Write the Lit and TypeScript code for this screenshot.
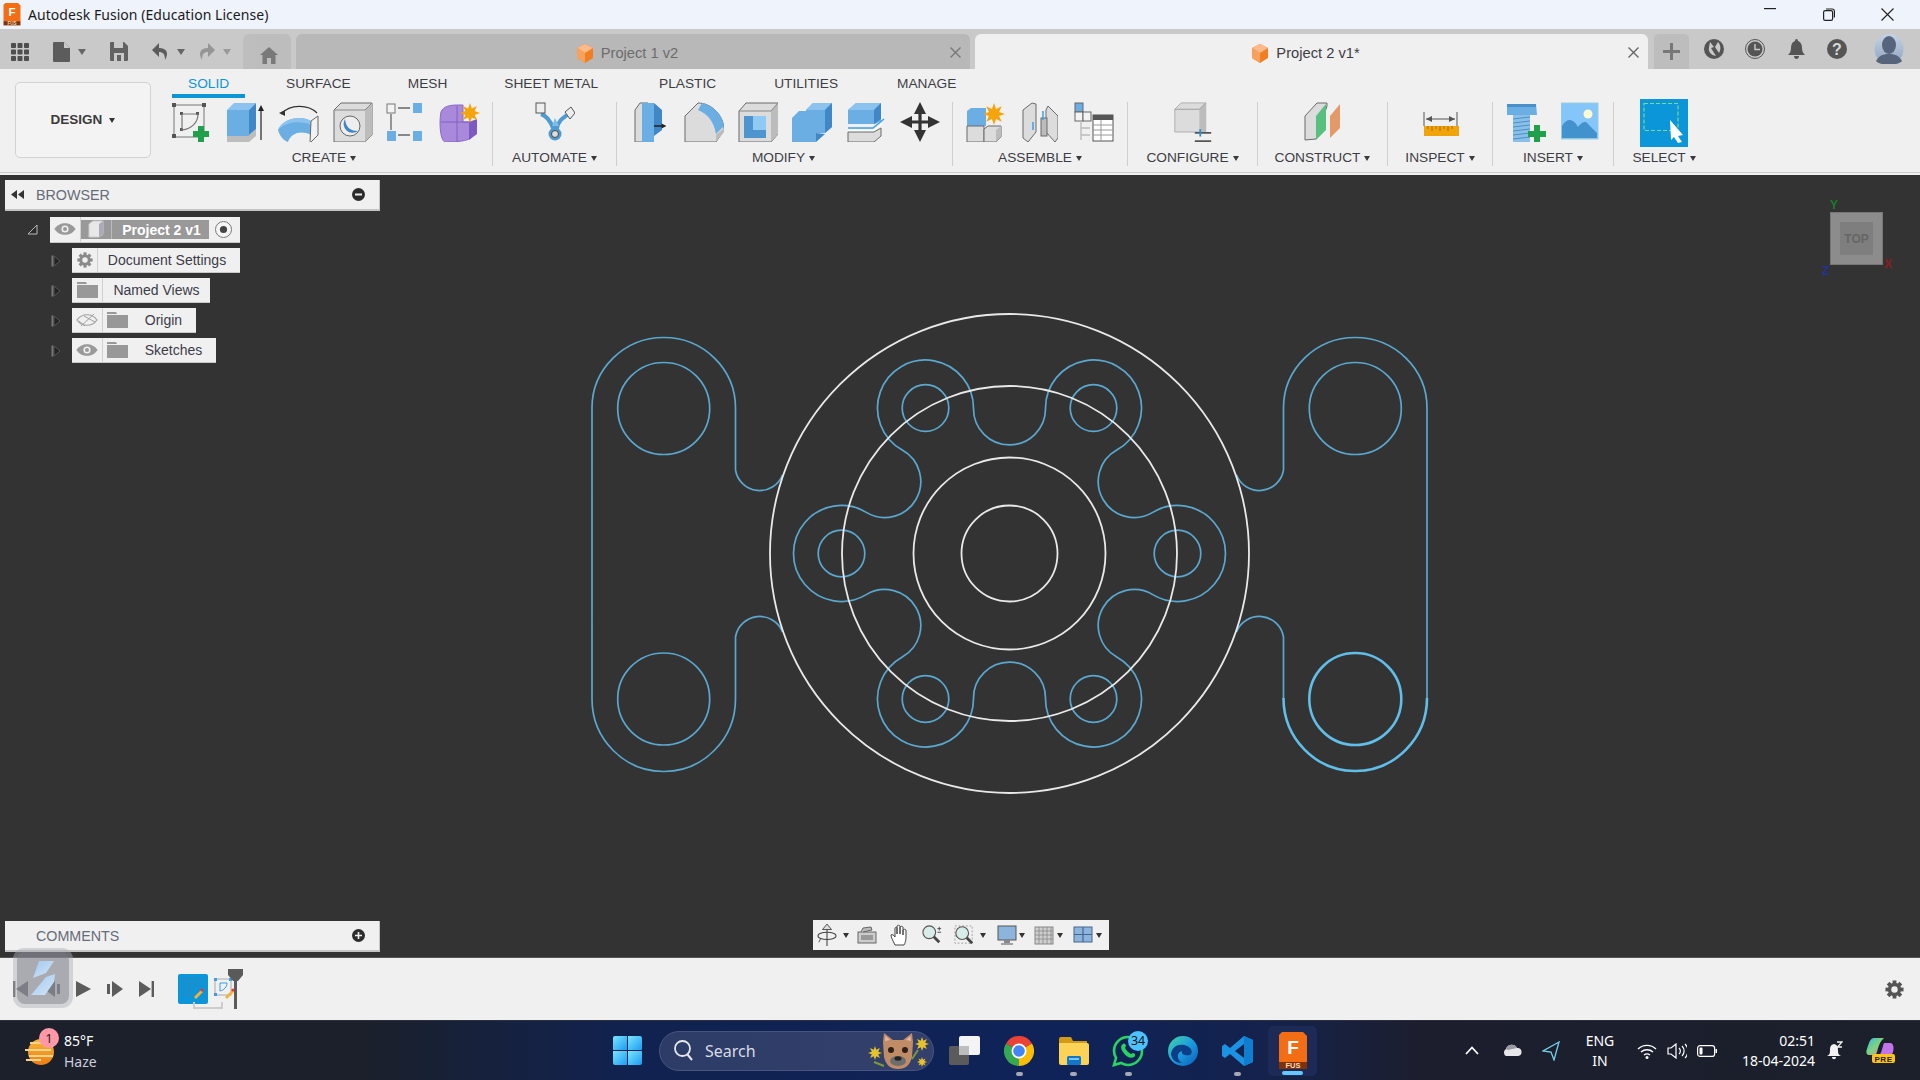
import { LitElement, html, css, svg } from "lit";
import { customElement } from "lit/decorators.js";

const I = (w: number, h: number, body: unknown, vw = w, vh = h) =>
  html`<svg width=${w} height=${h} viewBox="0 0 ${vw} ${vh}">${body}</svg>`;
const BL = "#6aaee4", BD = "#3f87c6", BT = "#8cc3ee", G1 = "#dcdcdc", G2 = "#bcbcbc", ST = "#6a6a6a";

const plus = (x: number, y: number, a = 8, t = 3) => svg`<path fill="#21a04c" d="M${x - t} ${y - a}h${2 * t}v${a - t}h${a - t}v${2 * t}h${t - a}v${a - t}h${-2 * t}v${t - a}h${t - a}v${-2 * t}h${a - t}z"/>`;
const star = (x: number, y: number, r = 8, fill = "#f5a40b") => {
  let p = "";
  for (let i = 0; i < 16; i++) {
    const a = (i * Math.PI) / 8, q = i % 2 ? r * 0.5 : r;
    p += `${i ? "L" : "M"}${(x + q * Math.cos(a)).toFixed(1)} ${(y + q * Math.sin(a)).toFixed(1)}`;
  }
  return svg`<path d="${p}Z" fill=${fill}/>`;
};
const arrowHead = (x: number, y: number, dir: "u" | "d" | "l" | "r", s = 5, f = "#333") => {
  const d = { u: `M${x} ${y - s}L${x + s} ${y + s}H${x - s}Z`, d: `M${x} ${y + s}L${x + s} ${y - s}H${x - s}Z`, l: `M${x - s} ${y}L${x + s} ${y - s}V${y + s}Z`, r: `M${x + s} ${y}L${x - s} ${y - s}V${y + s}Z` }[dir];
  return svg`<path d=${d} fill=${f}/>`;
};

const icons = {
  sketch: I(40, 40, svg`<rect x="3" y="3" width="30" height="32" fill="none" stroke="#777"/><g fill="#555"><rect x="1" y="1" width="4" height="4"/><rect x="31" y="1" width="4" height="4"/><rect x="1" y="32" width="4" height="4"/><rect x="9" y="10" width="3" height="3"/><rect x="25" y="10" width="3" height="3"/><rect x="9" y="26" width="3" height="3"/></g><path d="M11 12H27C27 20 21 27 11 28V12" fill="none" stroke="#777" stroke-width="1.2"/>${plus(30, 32)}`),
  extrude: I(40, 40, svg`<path d="M2 33V40H24L31 34V27L24 33Z" fill="#bdbdbd"/><rect x="2" y="8" width="22" height="26" fill=${BL}/><path d="M2 8L9 1H31L24 8Z" fill=${BT}/><path d="M24 8L31 1V27L24 33Z" fill=${BD}/><path d="M36 38V6" stroke="#222" stroke-width="1.2"/>${arrowHead(36, 6, "u", 3, "#222")}`),
  revolve: I(44, 40, svg`<path d="M4 12C13 2 31 2 40 11" fill="none" stroke="#333" stroke-width="1.2"/>${arrowHead(5, 11, "l", 3, "#333")}<path d="M1 28C6 16 24 13 34 19V33C24 28 14 31 11 40C6 38 3 34 1 28Z" fill=${BL}/><path d="M1 28C6 16 24 13 34 19L34 23C24 18 8 20 1 28Z" fill=${BT}/><path d="M34 19L41 14V33L33 41Z" fill="#f2f2f2" stroke="#666"/>`),
  hole: I(40, 40, svg`<path d="M1 8L8 1H39V33L32 40H1Z" fill=${G1} stroke=${ST}/><path d="M32 40V8L39 1V33Z" fill=${G2}/><path d="M1 8H32L39 1" fill="none" stroke="#888"/><circle cx="17" cy="24" r="10" fill="#eee" stroke="#666"/><path d="M12 17C13 26 18 29 25 29A9 9 0 0 1 12 17Z" fill="#3f87c6"/>`),
  pattern: I(42, 40, svg`<path d="M12 6H24M5 12V28M12 33H24" stroke="#666" stroke-width="1.3"/><rect x="1" y="2" width="8" height="9" fill="#f3f3f3" stroke="#777"/><rect x="27" y="1" width="9" height="10" fill=${BL}/><rect x="1" y="29" width="9" height="10" fill=${BL}/><rect x="27" y="29" width="9" height="10" fill=${BL}/>`),
  form: I(44, 40, svg`<path d="M2 10C4 4 12 3 18 3H24V20H34V34C30 40 14 40 6 40C1 38 0 20 2 10Z" fill="#a889dc" stroke="#8a6ac6"/><path d="M2 20H34M18 4V40" stroke="#7d5dbc" stroke-width=".9"/><path d="M30 20L38 17V32L30 38Z" fill="#7f59c2"/>${star(31, 11, 10)}`),
  automate: I(40, 40, svg`<path d="M6 12C12 14 15 18 18 26H22C24 18 28 16 32 13" fill="none" stroke="#4e9bd2" stroke-width="4"/><path d="M17 24L20 16L24 24Z" fill="#7fbce6"/><rect x="1" y="1" width="9" height="10" fill="#eee" stroke="#555"/><path d="M30 10L36 5L40 11L35 17Z" fill="#eee" stroke="#555"/><circle cx="20" cy="32" r="6.5" fill="#4e9bd2"/><circle cx="20" cy="32" r="3.5" fill="#ddd" stroke="#444"/>`),
  press: I(32, 40, svg`<path d="M1 40V8L6 1H14V40Z" fill=${G1} stroke=${ST}/><rect x="8" y="1" width="12" height="39" fill=${BL}/><path d="M20 1V34L28 28V8Z" fill=${BD}/><path d="M20 24H30" stroke="#222" stroke-width="1.5"/>${arrowHead(30, 24, "r", 2.5, "#222")}`),
  fillet: I(40, 40, svg`<path d="M1 14L14 1C28 1 40 14 40 28L32 40H1Z" fill=${G1} stroke=${ST}/><path d="M18 1C28 3 38 12 40 24L32 32C30 20 24 12 14 8Z" fill=${BL}/><path d="M32 33L40 26V30L32 40Z" fill=${G2}/>`),
  shell: I(40, 40, svg`<path d="M1 9L8 1H40V32L33 40H1Z" fill=${G1} stroke=${ST}/><path d="M33 40V9L40 1V32Z" fill=${G2}/><path d="M1 9H33L40 1" fill="none" stroke="#888"/><rect x="6" y="14" width="22" height="22" fill="#8fcaf5"/><path d="M6 14H15V28H28V36H6Z" fill="#4e94cf"/>`),
  combine: I(40, 40, svg`<path d="M0 16L7 9H24V40H0Z" fill=${BL}/><path d="M14 8L21 1H40V25L33 31H14Z" fill=${BL}/><path d="M14 8L21 1H40L33 8Z" fill=${BT}/><path d="M33 8L40 1V25L33 31Z" fill=${BD}/><path d="M24 31V40L33 32Z" fill=${BD}/>`),
  offset: I(38, 40, svg`<path d="M1 8L9 1H34V19L28 22H1Z" fill=${BL}/><path d="M1 8L9 1H34L27 8Z" fill=${BT}/><path d="M27 8L34 1V17L27 22Z" fill=${BD}/><path d="M1 26H26L37 17" fill="none" stroke="#3f9fe0" stroke-width="1.5"/><path d="M1 29H26L35 22" fill="none" stroke="#fff" stroke-width="1.5"/><path d="M1 30H27L34 26V34L27 40H1Z" fill=${G1} stroke=${ST}/>`),
  move: I(40, 40, svg`<path d="M20 6V34M6 20H34" stroke="#333" stroke-width="3.2"/>${arrowHead(20, 6, "u", 6, "#333")}${arrowHead(20, 34, "d", 6, "#333")}${arrowHead(6, 20, "l", 6, "#333")}${arrowHead(34, 20, "r", 6, "#333")}`),
  newcomp: I(40, 40, svg`<path d="M1 9L5 6H20V24H1Z" fill=${BL}/><path d="M1 24H18V40H1Z" fill=${G1} stroke=${ST}/><path d="M18 27L22 24H35V35L30 40H18Z" fill=${G1} stroke=${ST}/><path d="M30 40V28L35 24V35Z" fill=${G2}/>${star(28, 12, 11)}`),
  joint: I(36, 40, svg`<path d="M1 36V8L10 1L14 2V30L6 40Z" fill=${G1} stroke=${ST}/><path d="M36 36V14L26 4L24 8V30L33 40Z" fill=${G1} stroke=${ST}/><rect x="19" y="16" width="6" height="18" fill=${G2} stroke=${ST}/><path d="M21 9V18M11 20V28" stroke="#3f9fe0" stroke-width="1.5"/>`),
  bom: I(40, 40, svg`<rect x="1" y="1" width="8" height="9" fill=${BL} stroke="#666"/><rect x="1" y="10" width="8" height="9" fill="#f3f3f3" stroke="#666"/><rect x="9" y="10" width="8" height="9" fill="#f3f3f3" stroke="#666"/><path d="M7 19V38M7 26H16M7 33H16" stroke="#bbb" stroke-width="1.4"/><rect x="19" y="13" width="20" height="26" fill="#fff" stroke="#555"/><rect x="19" y="13" width="20" height="5" fill="#555"/><path d="M19 23H39M19 28H39M19 33H39M27 18V39" stroke="#999"/>`),
  configure: I(42, 40, svg`<path d="M1 8L8 1H35V33H1Z" fill=${G1} stroke="#aaa"/><path d="M28 33V8L35 1V33Z" fill=${G2}/><path d="M1 8H28L35 1" fill="none" stroke="#999"/><path d="M23 34H41M23 43H41" stroke="#555" stroke-width="2"/><path d="M29 30V38" stroke="#2b8fdc" stroke-width="2"/>`, 42, 44),
  construct: I(40, 40, svg`<path d="M2 38V14L14 1H24V4L13 37Z" fill=${G1} stroke=${ST}/><path d="M13 38V14L23 2V28Z" fill="#58c07f"/><path d="M27 36V14L37 2V26Z" fill="#e49a68"/>`),
  inspect: I(40, 40, svg`<path d="M4 10V24M37 10V24M6 17H35" stroke="#555" stroke-width="1"/>${arrowHead(9, 17, "l", 3, "#555")}${arrowHead(32, 17, "r", 3, "#555")}<rect x="4" y="24" width="35" height="10" fill="#f0a30a"/><path d="M8 24v3M12 24v5M16 24v3M20 24v5M24 24v3M28 24v5M32 24v3" stroke="#a86f00"/>`),
  bolt: I(40, 40, svg`<path d="M1 2H30L31 13H1Z" fill=${BL}/><path d="M1 2H30V5H1Z" fill="#4a8fc9"/><path d="M7 13H24V40H7Z" fill="#8ac0e8"/><path d="M7 17L24 15M7 21L24 19M7 25L24 23M7 29L24 27M7 33L24 31M7 37L24 35" stroke="#4a8fc9"/>${plus(31, 32, 9, 3)}`),
  image: I(38, 40, svg`<rect x="0" y="1" width="37" height="36" fill="#84c6f9" stroke="#9cd"/><circle cx="27" cy="12" r="4.5" fill="#fffbd0"/><path d="M1 36V24C6 16 12 16 17 25C20 21 24 18 27 22L36 31V36Z" fill="#4292ce"/>`),
  select: I(48, 48, svg`<rect x="0" y="0" width="48" height="48" fill="#0a96d8"/><rect x="4" y="4.500" width="34" height="27" fill="none" stroke="#7fd98a" stroke-width="1.200" stroke-dasharray="4 2"/><path d="M30 21L43 36L38 37L42 43L38 44L34 38L31 41Z" fill="#fff"/>`),
};

const cube = (s = 18) => I(s, s + 2, svg`<path d="M9 1L17 5V15L9 20L1 15V5Z" fill="#f27e1f"/><path d="M1 5L9 1L17 5L9 10Z" fill="#ffb98a"/><path d="M1 5L9 10V20L1 15Z" fill="#f6a25f"/>`, 18, 20);
const eye = (slash = false, c = "#999") => I(22, 14, svg`<path d="M1 7C6 0 16 0 21 7C16 14 6 14 1 7Z" fill=${slash ? "none" : c} stroke=${c} stroke-width="1.2"/>${slash ? svg`<path d="M5 13L18 1M3 8L9 13M8 3L19 9" stroke=${c} stroke-width="1"/>` : svg`<circle cx="11" cy="7" r="3.6" fill="#f0f0f0"/><circle cx="11" cy="7" r="2" fill=${c}/>`}`);
const folder = I(21, 16, svg`<path d="M0 0H9L10 2H0ZM0 3H21V16H0Z" fill="#989898"/>`);
const gear = (s: number, c: string) =>
  I(s, s, svg`<g fill=${c}><circle cx="10" cy="10" r="7"/>${[0, 45, 90, 135].map((a) => svg`<rect x="8" y="0.5" width="4" height="19" transform="rotate(${a} 10 10)"/>`)}</g><circle cx="10" cy="10" r="3.4" fill="#f0f0f0"/>`, 20, 20);
const tri = I(11, 12, svg`<path d="M0.500 0.500H2.500V11.500H0.500Z" fill="#777"/><path d="M3 1L9 6L3 11Z" fill="#222" stroke="#555"/>`);

const fusionLogo = (w: number, h: number) => I(w, h, svg`<path d="M3 0H24L28 4V30H0V3Z" fill="#f36d14"/><path d="M0 30H28V37H0Z" fill="#7d3208"/><text x="14" y="22" text-anchor="middle" font-family="Liberation Sans, sans-serif" font-weight="700" font-size="19" fill="#fff">F</text><text x="14" y="36" text-anchor="middle" font-family="Liberation Sans, sans-serif" font-weight="700" font-size="7.5" fill="#ffd9b8">FUS</text>`, 28, 38);

const nav = {
  orbit: I(20, 24, svg`<path d="M11 25V5" stroke="#444" stroke-width="1.2"/><path d="M11 1L6 7H16Z" fill="#ddd" stroke="#444"/><ellipse cx="11" cy="14" rx="10" ry="4" fill="none" stroke="#444" stroke-width="1.2"/><path d="M4 17L2 21" stroke="#444"/>`, 22, 26),
  look: I(20, 18, svg`<rect x="1" y="6" width="18" height="11" fill="#ccc" stroke="#666"/><rect x="4" y="9" width="12" height="5" fill="#999"/><path d="M4 6L6 2L14 1L15 4L6 6" fill="#bbb" stroke="#666"/>`),
  hand: I(20, 22, svg`<path d="M5 21C3 17 1 13 1 11C2 10 4 11 5 13V4C6 3 7 3 7 4V10V2C8 1 9 1 10 2V10V3C11 2 12 2 13 3V11V6C14 5 15 5 16 6V13C16 17 15 19 14 21Z" fill="#fff" stroke="#444" stroke-width="1"/>`),
  zoom: I(20, 20, svg`<circle cx="8" cy="8" r="7" fill="#d8ece8" stroke="#555" stroke-width="1.2"/><path d="M13 13L19 19" stroke="#444" stroke-width="3"/><path d="M17 4h4M19 2v4M17 8h4" stroke="#444"/>`, 22, 22),
  fit: I(20, 20, svg`<rect x="1" y="1" width="19" height="19" fill="none" stroke="#999" stroke-dasharray="2 2"/><circle cx="9" cy="9" r="7" fill="#d8ece8" stroke="#555" stroke-width="1.2"/><path d="M14 14L20 20" stroke="#444" stroke-width="3"/>`, 22, 22),
  disp: I(20, 20, svg`<rect x="1" y="1" width="18" height="14" fill="#8db4dc" stroke="#555"/><path d="M7 15H13V18H7Z" fill="#888"/><path d="M4 19H16" stroke="#555"/>`),
  grid: I(20, 20, svg`<rect x="1" y="2" width="18" height="17" fill="#cfcfcf" stroke="#888"/><path d="M5 2V19M9 2V19M13 2V19M17 2V19M1 6H19M1 10H19M1 14H19" stroke="#888" stroke-width=".8"/>`),
  view: I(20, 18, svg`<rect x="1" y="1" width="18" height="15" fill="#8db4dc" stroke="#46668c"/><path d="M10 1V16M1 8.5H19" stroke="#46668c" stroke-width="1.2"/>`),
};

const C = { x: 1009.5, y: 553.5 };
const pol = (r: number, deg: number) => ({ x: C.x + r * Math.cos((deg * Math.PI) / 180), y: C.y + r * Math.sin((deg * Math.PI) / 180) });
function lobePath() {
  const R = 48;
  const tan = (l: number, v: number) => {
    const L = pol(168, l), V = pol(144, v);
    const d = Math.hypot(V.x - L.x, V.y - L.y);
    return { x: L.x + ((V.x - L.x) * R) / d, y: L.y + ((V.y - L.y) * R) / d, r: d - R };
  };
  let d = "";
  for (let i = 0; i < 6; i++) {
    const l = i * 60;
    const a = tan(l, l - 30), b = tan(l, l + 30), c = tan(l + 60, l + 30);
    if (i === 0) d += `M${a.x.toFixed(2)} ${a.y.toFixed(2)}`;
    d += `A${R} ${R} 0 1 1 ${b.x.toFixed(2)} ${b.y.toFixed(2)}`;
    d += `A${c.r.toFixed(2)} ${c.r.toFixed(2)} 0 1 0 ${c.x.toFixed(2)} ${c.y.toFixed(2)}`;
  }
  return d + "Z";
}
const HOLE_ANG = [0, 60, 120, 180, 240, 300];

const sketchDrawing = html`<svg class="sketch" width="1920" height="783" viewBox="0 175 1920 783" fill="none">
  <g stroke="#5aa8cf" stroke-width="1.7">
    <path d=${lobePath()} />
    ${HOLE_ANG.map((a) => { const p = pol(168, a); return svg`<circle cx=${p.x} cy=${p.y} r="23.3"/>`; })}
    <path d="M735.5 470V408A71.75 70.5 0 0 0 592 408V699A71.75 72.5 0 0 0 735.5 699V637A24.5 24.5 0 0 1 782.5 632M735.5 470A24.5 24.5 0 0 0 782.5 475" />
    <circle cx="663.7" cy="408.5" r="46" /><circle cx="663.7" cy="699" r="46" />
    <path d="M1283.5 470V408A71.75 70.5 0 0 1 1427 408V699M1283.5 699V637A24.5 24.5 0 0 0 1236.5 632M1283.5 470A24.5 24.5 0 0 1 1236.5 475" />
    <circle cx="1355.3" cy="408.5" r="46" />
  </g>
  <g stroke="#60bee9" stroke-width="2.6"><circle cx="1355.3" cy="699" r="46" /><path d="M1283.5 698A71.75 73 0 0 0 1427 698" /></g>
  <g stroke="#e9e9e9" stroke-width="1.8">
    <circle cx=${C.x} cy=${C.y} r="239.5" /><circle cx=${C.x} cy=${C.y} r="167.5" /><circle cx=${C.x} cy=${C.y} r="96" /><circle cx=${C.x} cy=${C.y} r="48" />
  </g>
</svg>`;

@customElement("app-root")
export class AppRoot extends LitElement {
  static styles = css`
    :host { display: block; width: 1920px; height: 1080px; overflow: hidden; position: relative; font-family: "Liberation Sans", Arial, sans-serif; color: #3d3d44; background: #333; }
    * { box-sizing: border-box; }
    svg { display: block; flex: none; }
    .app { display: flex; flex-direction: column; height: 1080px; }

    .title { height: 29px; flex: none; background: #eff3fb; display: flex; align-items: center; padding-left: 3px; font: 14px "Noto Sans", sans-serif; color: #1b1b1b; }
    .title .tt { margin-left: 7px; letter-spacing: 0.05px; }
    .win { margin-left: auto; display: flex; padding-right: 3px; }
    .win span { width: 59px; display: flex; justify-content: center; }

    .strip { height: 40px; flex: none; background: #c9c9c9; padding-top: 5px; display: flex; }
    .tools { width: 243px; height: 35px; display: flex; align-items: center; padding-left: 11px; }
    .sm-caret { width: 0; height: 0; border: 4.5px solid transparent; border-top: 6px solid #666; border-bottom: 0; margin-left: 8px; }
    .sm-caret.dim { border-top-color: #999; }
    .gap24 { margin-left: 24px; }
    .gap23 { margin-left: 23px; }
    .gap20 { margin-left: 20px; }
    .gap17 { margin-left: 17px; }
    .gap13 { margin-left: 13px; }
    .gap10 { margin-left: 10px; }
    .gap12 { margin-left: 12px; }
    .copi { margin-left: 23px; margin-right: 25px; }
    .hometab { width: 48px; height: 35px; background: #bdbdbd; border-radius: 6px 6px 0 0; display: flex; align-items: center; justify-content: center; padding: 8px 0 0 3px; opacity: 0.92; }
    .tab { height: 35px; border-radius: 6px 6px 0 0; display: grid; grid-template-columns: 1fr auto 1fr; align-items: center; padding: 2px 12px 0 0; font-size: 14.7px; }
    .tab .lbl { display: flex; align-items: center; gap: 7px; grid-column: 2; }
    .tab .x { grid-column: 3; justify-self: end; font-size: 0; margin-right: -3px; }
    .t1 { width: 674px; background: #b8b8b8; margin-left: 5px; color: #6c6c6c; }
    .t2 { width: 673px; background: #f0f0f0; margin-left: 5px; color: #3d3d44; }
    .plustab { width: 35px; height: 35px; margin-left: 6px; background: #bdbdbd; border-radius: 5px 5px 0 0; display: flex; align-items: center; justify-content: center; }
    .stripR { display: flex; align-items: center; height: 30px; margin-left: 15px; gap: 21px; }
    .stripR .c20 { width: 20px; display: flex; justify-content: center; }
    .stripR .av { margin-left: 6px; }

    .ribbon { height: 106px; flex: none; background: #f0f0f0; display: flex; flex-direction: column; }
    .rib-row { display: flex; height: 103px; }
    .designWrap { width: 160px; padding: 13px 0 0 15px; }
    .design { width: 136px; height: 76px; border: 1.5px solid #d2d2d2; border-radius: 5px; display: flex; align-items: center; justify-content: center; gap: 7px; font-weight: 700; font-size: 13.5px; color: #3b3b3b; background: #f3f3f3; padding-bottom: 2px; }
    .design i { border: 3.5px solid transparent; border-top: 5px solid #333; border-bottom: 0; margin-top: 2px; }
    .main { display: flex; flex-direction: column; flex: 1; }
    .tabs { display: flex; height: 29px; padding-left: 12px; gap: 25px; font-size: 13.7px; }
    .rtab { padding: 4px 16px 0; line-height: 21px; height: 29px; border-bottom: 4.5px solid transparent; color: #3d3d44; }
    .rtab.on { color: #0b96d8; border-bottom-color: #0b96d8; }
    .rtab:nth-child(5) { margin-left: 4px; }
    .rtab:nth-child(6) { margin-left: 1px; }
    .rtab:nth-child(7) { margin-left: 2px; }
    .groups { display: flex; height: 68px; padding-top: 4px; }
    .g { height: 64px; border-right: 1.5px solid #cfcfcf; display: flex; flex-direction: column; align-items: center; }
    .g:last-child { border-right: 0; }
    .ics { height: 44px; flex: none; padding-bottom: 4px; display: flex; align-items: center; justify-content: center; }
    .cell { width: 54px; display: flex; justify-content: center; }
    .w8 .cell { margin-top: 2px; }
    .lab { height: 20px; flex: none; line-height: 20px; font-size: 13.7px; white-space: nowrap; color: #3d3d44; margin-top: 2px; display: flex; align-items: center; gap: 4px; }
    .car { width: 0; height: 0; border: 3.5px solid transparent; border-top: 5px solid #3a3a3a; border-bottom: 0; margin-top: 1px; }
    .w1 { width: 333px; } .w2 { width: 124px; } .w3 { width: 336px; } .w4 { width: 175px; } .w5 { width: 130px; } .w6 { width: 105px; } .w7 { width: 121px; } .w8 { width: 100px; }
    .w1 .lab { margin-right: 4px; }
    .w3 .lab { margin-right: 2px; }
    .line { height: 1px; background: #cbcbcb; }

    .canvas { height: 783px; flex: none; background: #333; position: relative; border-bottom: 1px solid #555; }
    .sketch { position: absolute; left: 0; top: 0; }
    .leftcol { position: absolute; left: 5px; top: 5px; bottom: 5px; width: 375px; display: flex; flex-direction: column; justify-content: space-between; }
    .panel { height: 31px; background: #f0f0f0; border-right: 1.5px solid #c4c4c4; border-bottom: 2px solid #c4c4c4; display: flex; align-items: center; font-size: 14.3px; color: #666c78; padding-right: 14px; }
    .panel .nm { margin-left: 31px; }
    .panel .nm.hasback { margin-left: 12px; }
    .panel .back { margin-left: 6px; }
    .panel .end { margin-left: auto; }
    .tree { display: flex; flex-direction: column; gap: 5px; margin-top: 6px; }
    .trow { display: flex; align-items: center; height: 25px; }
    .trow:first-child { margin-bottom: 1px; }
    .tw { width: 45px; padding-left: 22px; }
    .twc { width: 67px; padding-left: 46px; }
    .item { height: 25px; background: #f0f0f0; border-bottom: 1.5px solid #c8c8c8; display: flex; align-items: stretch; font-size: 14px; color: #3c3c48; }
    .cellI { display: flex; align-items: center; justify-content: center; border-right: 1px solid #d0d0d0; }
    .c26 { width: 26px; } .c31 { width: 31px; }
    .it { flex: 1; display: flex; align-items: center; justify-content: center; }
    .root { width: 190px; height: 26px; }
    .gray { width: 128px; margin: 3px 0; background: #999; display: flex; color: #fff; font-weight: 700; font-size: 14px; }
    .gray .cb { width: 31px; border-right: 1px solid #bbb; display: flex; align-items: center; justify-content: center; }
    .gray .tx { flex: 1; text-align: center; line-height: 20px; padding-left: 2px; }
    .radio { flex: 1; display: flex; align-items: center; justify-content: center; padding-right: 2px; }
    .i1 { width: 168px; } .i2 { width: 138px; } .i3 { width: 124px; } .i4 { width: 144px; }
    .i1 .it { padding-right: 4px; }
    .fold { width: 31px; display: flex; align-items: center; justify-content: center; padding-right: 2px; }
    .it.pr { padding-right: 3px; }

    .cubeview { position: absolute; left: 1822px; top: 27px; width: 74px; height: 80px; }
    .cv-face { position: absolute; left: 8px; top: 10px; width: 53px; height: 53px; background: #8c8c8c; border: 1px solid #777; display: flex; align-items: center; justify-content: center; }
    .cv-in { width: 33px; height: 33px; background: #7e7e7e; display: flex; align-items: center; justify-content: center; font-size: 12px; font-weight: 700; color: #666; }
    .ax { position: absolute; font-size: 12px; font-weight: 700; }
    .ay { left: 8px; top: -4px; color: #1b7a2b; } .ax-x { left: 62px; top: 55px; color: #8e1c1c; } .az { left: 0; top: 62px; color: #22329e; }

    .navbar { position: absolute; left: 813px; top: 745px; width: 296px; height: 30px; background: #f0f0f0; display: flex; align-items: center; padding-left: 4px; }
    .nc { width: 0; height: 0; border: 3.5px solid transparent; border-top: 5px solid #333; border-bottom: 0; }
    .m2 { margin-left: 2px; } .m3 { margin-left: 3px; } .m6 { margin-left: 6px; } .m8 { margin-left: 8px; } .m9 { margin-left: 9px; } .m10 { margin-left: 10px; } .m11 { margin-left: 11px; } .m12 { margin-left: 12px; } .m13 { margin-left: 13px; }

    .timeline { height: 62px; flex: none; background: #f0f0f0; display: flex; align-items: center; padding: 0 16px 0 13px; }
    .tr { display: flex; align-items: center; gap: 16px; width: 165px; }
    .tlbox { width: 30px; height: 30px; background: #0a96d8; border-radius: 2px; display: flex; align-items: center; justify-content: center; }
    .tlwrap { position: relative; display: flex; align-items: center; gap: 5px; height: 40px; }
    .brk { position: absolute; left: 15px; top: 33px; width: 30px; height: 7px; border: 2px solid #ccc; border-top: 0; }
    .marker { margin-left: -12px; }
    .gearR { margin-left: auto; }
    .floaty { position: absolute; left: 13px; top: 948px; width: 60px; height: 60px; border-radius: 11px; background: rgba(170, 175, 185, 0.45); padding: 4px; }
    .floaty div { width: 52px; height: 52px; border-radius: 8px; background: rgba(120, 122, 130, 0.45); display: flex; align-items: center; justify-content: center; }

    .task { height: 60px; flex: none; background: linear-gradient(90deg, #1b202b 0%, #1b202b 19%, #11224f 32%, #0f2359 55%, #14224c 66%, #1c1e2e 74%, #1b202b 100%); border-top: 1px solid #2b2f3e; display: flex; align-items: center; font-family: "Noto Sans", sans-serif; color: #fff; }
    .wx { width: 613px; display: flex; align-items: center; padding-left: 25px; position: relative; height: 58px; }
    .wxt { margin-left: 9px; font-size: 14px; line-height: 21px; }
    .wxt .h { color: #ccd; }
    .badge { position: absolute; left: 39px; top: 6px; width: 20px; height: 20px; border-radius: 50%; background: #ff98a6; color: #222; font-size: 13px; display: flex; align-items: center; justify-content: center; }
    .search { width: 275px; height: 40px; margin-left: 17px; border-radius: 20px; background: linear-gradient(90deg, #2c3c66, #33406c); border: 1px solid #47557e; display: flex; align-items: center; padding-left: 14px; font-size: 16px; color: #d8dbe6; gap: 12px; position: relative; }
    .search .mas { margin-left: auto; margin-right: 3px; }
    .apps { margin-left: 3px; display: flex; height: 58px; }
    .ap { width: 54.7px; display: flex; align-items: center; justify-content: center; position: relative; }
    .dot { position: absolute; bottom: 4px; left: 50%; margin-left: -3.5px; width: 7px; height: 3.5px; border-radius: 2px; background: #a6a9b4; }
    .ap.act { background: #1d2a55; border-radius: 5px; height: 50px; margin-top: 4px; width: 49px; margin-left: 3px; }
    .ap.act .bar { position: absolute; bottom: 1px; left: 14px; width: 21px; height: 3.5px; border-radius: 2px; background: #62c8ff; }
    .cnt { position: absolute; left: 27px; top: 9px; width: 20px; height: 20px; border-radius: 50%; background: #4cc2ff; color: #111; font-size: 12.5px; display: flex; align-items: center; justify-content: center; }
    .tray { margin-left: auto; display: flex; align-items: center; height: 58px; }
    .lang { text-align: center; font-size: 14px; line-height: 20px; width: 40px; margin-left: 20px; }
    .clock { text-align: right; font-size: 14px; line-height: 20px; margin-left: 20px; width: 78px; }
  `;

  private group(w: string, label: string, items: unknown[]) {
    return html`<div class="g ${w}">
      <div class="ics">${items.map((i) => html`<div class="cell">${i}</div>`)}</div>
      <div class="lab">${label}<span class="car"></span></div>
    </div>`;
  }

  render() {
    const I_ = icons;
    return html`<div class="app">
      <div class="title">
        ${fusionLogo(18, 23)}
        <span class="tt">Autodesk Fusion (Education License)</span>
        <div class="win">
          <span>${I(12, 2, svg`<rect width="12" height="1.2" fill="#222"/>`)}</span>
          <span>${I(12, 13, svg`<rect x=".6" y="2.6" width="9" height="9.8" rx="1.6" fill="none" stroke="#222" stroke-width="1.2"/><path d="M3 1H9.5A2 2 0 0 1 11.4 3V9.5" fill="none" stroke="#222" stroke-width="1.2"/>`)}</span>
          <span>${I(13, 13, svg`<path d="M.5 .5L12.5 12.5M12.5 .5L.5 12.5" stroke="#222" stroke-width="1.1"/>`)}</span>
        </div>
      </div>

      <div class="strip">
        <div class="tools">
          ${I(18, 18, svg`<g fill="#4e4e4e">${[0, 6.5, 13].flatMap((x) => [0, 6.5, 13].map((y) => svg`<rect x=${x} y=${y} width="5" height="5" rx=".8"/>`))}</g>`)}
          <span class="gap24">${I(17, 20, svg`<path d="M0 1A1 1 0 0 1 1 0H11L17 6V19A1 1 0 0 1 16 20H1A1 1 0 0 1 0 19Z" fill="#5c5c5c"/><path d="M11 0V6H17Z" fill="#c9c9c9"/>`)}</span>
          <span class="sm-caret"></span>
          <span class="gap24">${I(18, 19, svg`<path d="M1 0H14L18 4V18A1 1 0 0 1 17 19H1A1 1 0 0 1 0 18V1A1 1 0 0 1 1 0Z" fill="#626262"/><rect x="4" y="0" width="9" height="6" fill="#c9c9c9"/><rect x="4" y="11" width="10" height="8" fill="#c9c9c9"/><rect x="7" y="13" width="4" height="6" fill="#626262"/>`)}</span>
          <span class="gap24">${I(17, 17, svg`<path d="M7 0L0 7L7 14V9C11 9 13 11 13 17C17 10 15 5 7 5Z" fill="#5c5c5c"/>`)}</span>
          <span class="sm-caret"></span>
          <span class="gap13">${I(17, 17, svg`<path d="M10 0L17 7L10 14V9C6 9 4 11 4 17C0 10 2 5 10 5Z" fill="#959595"/>`)}</span>
          <span class="sm-caret dim"></span>
        </div>
        <div class="hometab">${I(18, 17, svg`<path d="M9 0L18 8H15.5V17H11V11H7V17H2.5V8H0Z" fill="#737373"/>`)}</div>
        <div class="tab t1"><span class="lbl">${cube()}Project 1 v2</span><span class="x">${I(11, 11, svg`<path d="M.5 .5L10.5 10.5M10.5 .5L.5 10.5" stroke="#777" stroke-width="1.4"/>`)}</span></div>
        <div class="tab t2"><span class="lbl">${cube()}Project 2 v1*</span><span class="x">${I(11, 11, svg`<path d="M.5 .5L10.5 10.5M10.5 .5L.5 10.5" stroke="#666" stroke-width="1.4"/>`)}</span></div>
        <div class="plustab">${I(17, 17, svg`<path d="M7 0H10V7H17V10H10V17H7V10H0V7H7Z" fill="#777"/>`)}</div>
        <div class="stripR">
          <span class="c20">${I(20, 20, svg`<circle cx="10" cy="10" r="10" fill="#555"/><path d="M6 3L10 8L7 9L12 17C7 16 4 13 5 8ZM14 3C17 6 17 11 15 14L11 8Z" fill="#c9c9c9"/>`)}</span>
          <span class="c20">${I(20, 20, svg`<circle cx="10" cy="10" r="9.5" fill="none" stroke="#555"/><circle cx="10" cy="10" r="7.5" fill="#555"/><path d="M10 5V10.5H15" fill="none" stroke="#c9c9c9" stroke-width="1.4"/>`)}</span>
          <span class="c20">${I(17, 20, svg`<path d="M8.5 0C10 0 10 2 10 2C13 3 14 6 14 9C14 12 15 14 17 16H0C2 14 3 12 3 9C3 6 4 3 7 2C7 2 7 0 8.5 0ZM6 17H11C11 21 6 21 6 17Z" fill="#555"/>`)}</span>
          <span class="c20">${I(20, 20, svg`<circle cx="10" cy="10" r="10" fill="#555"/><text x="10" y="16" text-anchor="middle" font-family="Liberation Sans, sans-serif" font-weight="700" font-size="16" fill="#d8d8d8">?</text>`)}</span>
          <span class="av">${I(30, 30, svg`<defs><linearGradient id="av" x1="0" y1="0" x2="0" y2="1"><stop offset="0" stop-color="#c5d3e4"/><stop offset="1" stop-color="#8fa3bf"/></linearGradient></defs><ellipse cx="15" cy="15" rx="14.5" ry="15" fill="url(#av)"/><ellipse cx="15" cy="11" rx="7" ry="9" fill="#57657c"/><path d="M2 27C5 21 10 20 15 20C20 20 25 21 28 27C24 32 6 32 2 27Z" fill="#57657c"/>`)}</span>
        </div>
      </div>

      <div class="ribbon">
        <div class="rib-row">
          <div class="designWrap"><div class="design">DESIGN <i></i></div></div>
          <div class="main">
            <div class="tabs">
              <div class="rtab on">SOLID</div><div class="rtab">SURFACE</div><div class="rtab">MESH</div><div class="rtab">SHEET METAL</div><div class="rtab">PLASTIC</div><div class="rtab">UTILITIES</div><div class="rtab">MANAGE</div>
            </div>
            <div class="groups">
              ${this.group("w1", "CREATE", [I_.sketch, I_.extrude, I_.revolve, I_.hole, I_.pattern, I_.form])}
              ${this.group("w2", "AUTOMATE", [I_.automate])}
              ${this.group("w3", "MODIFY", [I_.press, I_.fillet, I_.shell, I_.combine, I_.offset, I_.move])}
              ${this.group("w4", "ASSEMBLE", [I_.newcomp, I_.joint, I_.bom])}
              ${this.group("w5", "CONFIGURE", [I_.configure])}
              ${this.group("w5", "CONSTRUCT", [I_.construct])}
              ${this.group("w6", "INSPECT", [I_.inspect])}
              ${this.group("w7", "INSERT", [I_.bolt, I_.image])}
              ${this.group("w8", "SELECT", [I_.select])}
            </div>
          </div>
        </div>
        <div class="line"></div>
      </div>

      <div class="canvas">
        ${sketchDrawing}
        <div class="leftcol">
          <div>
            <div class="panel">
              <span class="back">${I(13, 9, svg`<path d="M6 0V9L0 4.5ZM13 0V9L7 4.5Z" fill="#333"/>`)}</span>
              <span class="nm hasback">BROWSER</span>
              <span class="end">${I(13, 13, svg`<circle cx="6.5" cy="6.5" r="6.5" fill="#2c2c2c"/><rect x="3" y="5.5" width="7" height="2" fill="#f0f0f0"/>`)}</span>
            </div>
            <div class="tree">
              <div class="trow">
                <div class="tw">${I(11, 11, svg`<path d="M10 1V10H1Z" fill="#2a2a2a" stroke="#bbb"/>`)}</div>
                <div class="item root">
                  <div class="cellI c31">${eye(false)}</div>
                  <div class="gray"><div class="cb">${I(16, 18, svg`<path d="M1 4L5 1H15V14L11 17H1Z" fill="#e8e8e8" stroke="#ccc"/><path d="M11 17V4L15 1V14Z" fill="#aab"/>`)}</div><div class="tx">Project 2 v1</div></div>
                  <div class="radio">${I(17, 17, svg`<circle cx="8.5" cy="8.5" r="8" fill="#f6f6f6" stroke="#777"/><circle cx="8.5" cy="8.5" r="3.6" fill="#444"/>`)}</div>
                </div>
              </div>
              <div class="trow"><div class="twc">${tri}</div><div class="item i1"><div class="cellI c26">${gear(16, "#8a8a8a")}</div><div class="it">Document Settings</div></div></div>
              <div class="trow"><div class="twc">${tri}</div><div class="item i2"><div class="cellI c31">${folder}</div><div class="it">Named Views</div></div></div>
              <div class="trow"><div class="twc">${tri}</div><div class="item i3"><div class="cellI c31">${eye(true, "#a0a0a0")}</div><div class="fold">${folder}</div><div class="it pr">Origin</div></div></div>
              <div class="trow"><div class="twc">${tri}</div><div class="item i4"><div class="cellI c31">${eye(false, "#999")}</div><div class="fold">${folder}</div><div class="it pr">Sketches</div></div></div>
            </div>
          </div>
          <div class="panel"><span class="nm">COMMENTS</span><span class="end">${I(13, 13, svg`<circle cx="6.5" cy="6.5" r="6.5" fill="#2c2c2c"/><path d="M5.7 3H7.3V5.7H10V7.3H7.3V10H5.7V7.3H3V5.7H5.7Z" fill="#f0f0f0"/>`)}</span></div>
        </div>
        <div class="cubeview">
          <div class="ax ay">Y</div><div class="cv-face"><div class="cv-in">TOP</div></div><div class="ax ax-x">X</div><div class="ax az">Z</div>
        </div>
        <div class="navbar">
          ${nav.orbit}<span class="nc m6"></span>
          <span class="m8">${nav.look}</span>
          <span class="m13">${nav.hand}</span>
          <span class="m12">${nav.zoom}</span>
          <span class="m12">${nav.fit}</span><span class="nc m6"></span>
          <span class="m11">${nav.disp}</span><span class="nc m2"></span>
          <span class="m9">${nav.grid}</span><span class="nc m3"></span>
          <span class="m10">${nav.view}</span><span class="nc m3"></span>
        </div>
      </div>

      <div class="timeline">
        <div class="tr">
          ${I(15, 16, svg`<rect width="2.4" height="16" fill="#5c5c5c"/><path d="M15 0V16L3 8Z" fill="#5c5c5c"/>`)}
          ${I(16, 16, svg`<rect x="13" y="3" width="3" height="10" fill="#5c5c5c"/><path d="M11 0V16L0 8Z" fill="#5c5c5c"/>`)}
          ${I(15, 16, svg`<path d="M0 0V16L15 8Z" fill="#5c5c5c"/>`)}
          ${I(16, 16, svg`<rect x="0" y="3" width="3" height="10" fill="#5c5c5c"/><path d="M5 0V16L16 8Z" fill="#5c5c5c"/>`)}
          ${I(15, 16, svg`<rect x="12.6" width="2.4" height="16" fill="#5c5c5c"/><path d="M0 0V16L12 8Z" fill="#5c5c5c"/>`)}
        </div>
        <div class="tlwrap">
          <div class="tlbox">${I(22, 22, svg`<rect x="2" y="1" width="16" height="16" fill="none" stroke="#3a82b8"/><path d="M7 5H13C13 9 11 12 7 13Z" fill="none" stroke="#3a82b8"/><path d="M12 19L19 12L21 14L14 21Z" fill="#f2b43c"/><circle cx="20" cy="12" r="1.6" fill="#e33"/>`)}</div>
          ${I(22, 22, svg`<rect x="2" y="1" width="16" height="16" fill="none" stroke="#aaa"/><rect x="1" y="0" width="3" height="3" fill="#3a9de0"/><rect x="16" y="0" width="3" height="3" fill="#3a9de0"/><rect x="1" y="15" width="3" height="3" fill="#3a9de0"/><path d="M7 5H14C14 9 11 12 7 13Z" fill="none" stroke="#3a9de0"/><path d="M12 19L19 12L21 14L14 21Z" fill="#f2b43c"/><circle cx="20" cy="12" r="1.6" fill="#e33"/>`)}
          <div class="brk"></div>
          <span class="marker">${I(15, 40, svg`<rect x="0" y="0" width="15" height="6" fill="#5a5a5a"/><path d="M0 6H15L10 12H5Z" fill="#5a5a5a"/><rect x="6" y="10" width="3" height="30" fill="#5a5a5a"/>`)}</span>
        </div>
        <span class="gearR">${gear(19, "#555")}</span>
      </div>

      <div class="task">
        <div class="wx">
          ${I(30, 32, svg`<defs><linearGradient id="sun" x1="0" y1="0" x2="0" y2="1"><stop offset="0" stop-color="#f7b733"/><stop offset="1" stop-color="#ec7d16"/></linearGradient></defs><circle cx="16" cy="17" r="13" fill="url(#sun)"/><path d="M5 8H16M0 15H26M4 21H28M1 25H16" stroke="#f3d48f" stroke-width="2"/>`)}
          <div class="badge">1</div>
          <div class="wxt"><div>85°F</div><div class="h">Haze</div></div>
        </div>
        ${I(29, 29, svg`<defs><linearGradient id="win" x1="0" y1="0" x2="1" y2="1"><stop offset="0" stop-color="#7ce5ff"/><stop offset="1" stop-color="#1a9cf0"/></linearGradient></defs><g fill="url(#win)"><path d="M2 0H14V14H0V2A2 2 0 0 1 2 0Z"/><path d="M15 0H27A2 2 0 0 1 29 2V14H15Z"/><path d="M0 15H14V29H2A2 2 0 0 1 0 27Z"/><path d="M15 15H29V27A2 2 0 0 1 27 29H15Z"/></g>`)}
        <div class="search">
          ${I(19, 21, svg`<circle cx="8.500" cy="8.500" r="7.500" fill="none" stroke="#e6e8ef" stroke-width="1.800"/><path d="M13.500 14.500L18 20" stroke="#e6e8ef" stroke-width="2"/>`)}
          Search
          <span class="mas">${I(62, 36, svg`${star(7, 20, 7, "#e8c22a")}${star(54, 11, 7, "#e8c22a")}${star(54, 29, 5, "#e8c22a")}<path d="M6 29L16 33M50 17L44 26" stroke="#7a9a35" stroke-width="2"/><path d="M15 9L16 0L25 7H35L44 0L45 9L44 24C42 32 38 36 30 36C22 36 18 32 16 24Z" fill="#c08c66"/><path d="M17 8L17.500 3L22 7ZM43 8L42.500 3L38 7Z" fill="#e8b5a5"/><circle cx="23" cy="17" r="3" fill="#2b1f1a"/><circle cx="37" cy="17" r="3" fill="#2b1f1a"/><ellipse cx="30" cy="28" rx="8" ry="5" fill="#6d6d6d"/><ellipse cx="30" cy="25.500" rx="3.500" ry="2.200" fill="#222"/>`)}</span>
        </div>
        <div class="apps">
          <div class="ap">${I(31, 29, svg`<rect x="0" y="10" width="20" height="19" rx="2" fill="#5b5b5b"/><rect x="10" y="0" width="21" height="19" rx="2" fill="#f4f4f6"/><rect x="10" y="10" width="10" height="9" fill="#bdbdbd"/>`)}</div>
          <div class="ap">${I(30, 30, svg`<path d="M15 15L2 7.500A15 15 0 0 1 28 7.500Z" fill="#ea4335"/><path d="M15 15L2 7.500A15 15 0 0 0 15 30Z" fill="#34a853"/><path d="M15 15L15 30A15 15 0 0 0 28 7.500Z" fill="#fbbc05"/><circle cx="15" cy="15" r="7.500" fill="#fff"/><circle cx="15" cy="15" r="5.800" fill="#4285f4"/>`)}<span class="dot"></span></div>
          <div class="ap">${I(30, 28, svg`<path d="M0 2A2 2 0 0 1 2 0H12L14 4H28V10H0Z" fill="#d29a17"/><path d="M0 6H28A2 2 0 0 1 30 8V26A2 2 0 0 1 28 28H2A2 2 0 0 1 0 26Z" fill="#fcd257"/><rect x="8" y="19" width="14" height="9" rx="1.500" fill="#1177c8"/><rect x="10" y="21" width="10" height="2" fill="#7cc4f0"/>`)}<span class="dot"></span></div>
          <div class="ap">${I(32, 32, svg`<path d="M16 2A14 14 0 0 1 16 30C13 30 11 29 9 28L2 30L4 23C3 21 2 19 2 16A14 14 0 0 1 16 2Z" fill="none" stroke="#29d35f" stroke-width="2.600"/><path d="M11 9C9 10 8 13 11 17C14 22 19 24 22 22C24 21 23 18 21 18L19 19C17 18 14 15 13 13L14 11C14 9 12 8 11 9Z" fill="#29d35f"/>`)}<span class="cnt">34</span><span class="dot"></span></div>
          <div class="ap">${I(30, 30, svg`<defs><linearGradient id="ed" x1="0" y1="0" x2="1" y2="1"><stop offset="0" stop-color="#43d8a0"/><stop offset=".5" stop-color="#1c9ce0"/><stop offset="1" stop-color="#0b5cb8"/></linearGradient></defs><circle cx="15" cy="15" r="15" fill="url(#ed)"/><path d="M3 18C4 10 12 7 19 10C24 12 25 17 22 19C18 20 13 19 14 15C9 16 8 23 14 27C8 27 4 24 3 18Z" fill="#0b3e86"/>`)}</div>
          <div class="ap">${I(31, 30, svg`<path d="M22 0L31 4V26L22 30L8 18L3 22L0 20V10L3 8L8 12ZM22 8L13 15L22 22Z" fill="#1c93e2" fill-rule="evenodd"/><path d="M22 0L31 4V26L22 30Z" fill="#0f7ed0"/>`)}<span class="dot"></span></div>
          <div class="ap act">${fusionLogo(28, 38)}<span class="bar"></span></div>
        </div>
        <div class="tray">
          ${I(14, 9, svg`<path d="M1 8L7 1.500L13 8" fill="none" stroke="#fff" stroke-width="1.800"/>`)}
          <span class="gap23">${I(20, 13, svg`<path d="M4 12A4 4 0 0 1 4 5A6 6 0 0 1 15 4A4 4 0 0 1 16 12Z" fill="#e8e8ec"/><path d="M4 5A6 6 0 0 1 15 4L6 6Z" fill="#9a9aa2"/>`)}</span>
          <span class="gap20">${I(18, 20, svg`<path d="M17 1L1 10L9 11L12 19Z" fill="none" stroke="#74d1e8" stroke-width="1.300"/>`)}</span>
          <div class="lang">ENG<br />IN</div>
          <span class="gap17">${I(20, 16, svg`<path d="M1 6A13 13 0 0 1 19 6M4 9A9 9 0 0 1 16 9M7 12A5 5 0 0 1 13 12" fill="none" stroke="#fff" stroke-width="1.400"/><circle cx="10" cy="14.500" r="1.500" fill="#fff"/>`)}</span>
          <span class="gap10">${I(20, 16, svg`<path d="M1 5H4L9 1V15L4 11H1Z" fill="none" stroke="#fff" stroke-width="1.200"/><path d="M12 5A4 4 0 0 1 12 11M15 3A7 7 0 0 1 15 13M18 1A10 10 0 0 1 18 15" fill="none" stroke="#fff" stroke-width="1.200"/>`)}</span>
          <span class="gap10">${I(20, 12, svg`<rect x=".6" y=".6" width="17" height="10.800" rx="2.500" fill="none" stroke="#fff" stroke-width="1.200"/><rect x="2.500" y="2.500" width="3" height="7" rx="1" fill="#fff"/><rect x="18.500" y="4" width="1.500" height="4" fill="#fff"/>`)}</span>
          <div class="clock">02:51<br />18-04-2024</div>
          <span class="gap12">${I(16, 20, svg`<path d="M7 3C3 4 3 7 3 10C3 13 2 14 0 15H14C12 14 11 13 11 10C11 7 11 4 7 3ZM5 16H9C9 19 5 19 5 16Z" fill="#f2f2f2"/><path d="M10 1H15L10.500 6H15" fill="none" stroke="#f2f2f2" stroke-width="1.300"/>`)}</span>
          <span class="copi">${I(29, 34, svg`<defs><linearGradient id="cop" x1="0" y1="0" x2="1" y2="1"><stop offset="0" stop-color="#35b6f0"/><stop offset=".5" stop-color="#7ed47a"/><stop offset="1" stop-color="#e87ad8"/></linearGradient></defs><path d="M8 4H18C13 8 12 15 10 21H3C0 21 0 17 1 15C3 9 4 4 8 4Z" fill="url(#cop)"/><path d="M18 9H24C28 9 28 15 27 18C25 23 22 23 18 23H12C16 19 16 14 18 9Z" fill="#c474ea"/><rect x="6" y="20" width="23" height="9" rx="2" fill="#ffc21a"/><text x="17.500" y="27.500" text-anchor="middle" font-family="Liberation Sans, sans-serif" font-weight="700" font-size="8" fill="#222" letter-spacing=".6">PRE</text>`)}</span>
        </div>
      </div>
      <div class="floaty"><div>${I(26, 34, svg`<defs><linearGradient id="sg" x1="0" y1="0" x2="1" y2="1"><stop offset="0" stop-color="#a3c9ee"/><stop offset="1" stop-color="#d2e6f8"/></linearGradient></defs><path d="M9 0H24L16 12L3 17Z" fill="url(#sg)"/><path d="M16 16L25 13L24 21L15 34H1Z" fill="url(#sg)"/>`)}</div></div>
    </div>`;
  }
}
